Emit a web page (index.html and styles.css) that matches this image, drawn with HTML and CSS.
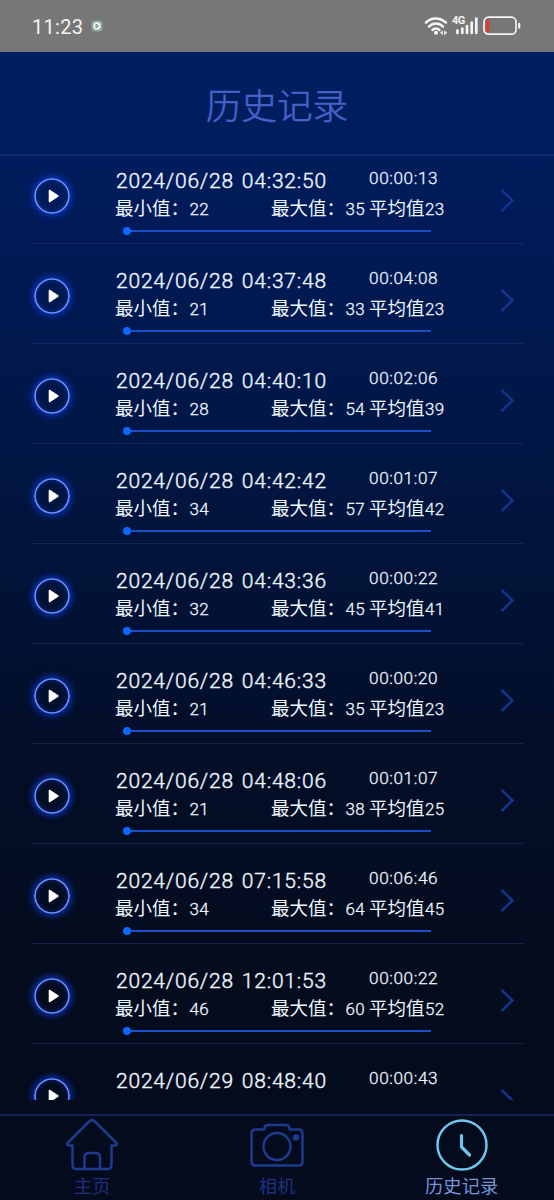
FILE: index.html
```html
<!DOCTYPE html>
<html lang="zh-CN">
<head>
<meta charset="utf-8">
<title>历史记录</title>
<link rel="stylesheet" href="styles.css">
</head>
<body>
<svg class="defs" width="0" height="0">
  <symbol id="play" viewBox="0 0 36 36"><circle cx="18" cy="18" r="17" fill="none" stroke="#6d90ff" stroke-width="1.7"/><path d="M15.500 12.500 23.800 18l-8.300 5.500z" fill="#fff" stroke="#fff" stroke-width="1.6" stroke-linejoin="round"/></symbol>
  <symbol id="chevron" viewBox="0 0 16 26"><path d="M2.500 3l11 10.500L2.500 24" fill="none" stroke="#14358f" stroke-width="2.500"/></symbol>
</svg>
<div class="screen">
  <div class="status">
    <span class="clock">11:23</span>
    <svg class="app-dot" viewBox="0 0 12 12"><rect x=".5" y=".5" width="11" height="11" rx="3.500" fill="#8fa79d"/><circle cx="6" cy="6" r="3.700" fill="#f4f8f6"/><path d="M5 4.300l2.500 1.700L5 7.700z" fill="none" stroke="#60736b" stroke-width=".9"/></svg>
    <svg class="wifi" viewBox="0 0 24 20" fill="none" stroke="#f4f4f4" stroke-width="2.500" stroke-linecap="round"><path d="M2 6.500C7.500 1 15.500 1 22 6.500M5 10.600c4-4 10-4 14 0M8.400 14c2-1.900 5-1.900 7 0"/><circle cx="12" cy="16.800" r="1.300" fill="#f4f4f4" stroke-width="1.500"/><path d="M18.800 14.200v5l-2.600-2.500zM20.200 14.200v5l2.800-2.500z" fill="#f4f4f4" stroke="none"/></svg>
    <span class="cell"><b>4G</b><svg viewBox="0 0 24 20" stroke="#f4f4f4" stroke-width="2.700" stroke-linecap="round"><path d="M3.400 14.500v2.500M8.300 12.500V17M13 10V17M17.700 6.500V17M22.300 2.500V17"/></svg></span>
    <svg class="battery" viewBox="0 0 38 20"><rect x="1" y="1.200" width="32" height="17" rx="4.500" fill="none" stroke="#f4f4f4" stroke-width="1.700"/><path d="M6.200 3.400v12.800H5Q2.800 16.200 2.800 13V6.600Q2.800 3.400 5 3.400z" fill="#e5382f"/><path d="M36.200 7.800v3.800" stroke="#f4f4f4" stroke-width="2.200" stroke-linecap="round"/></svg>
  </div>
  <header class="title">历史记录</header>
  <main class="list">
    <article class="row"><svg class="play"><use href="#play"/></svg><div class="info"><div class="top"><time>2024/06/28 04:32:50</time><span class="duration">00:00:13</span></div><div class="stats"><span class="min">最小值：<i>22</i></span><span class="max">最大值：<i>35</i></span><span>平均值<i>23</i></span></div><div class="track"></div></div><svg class="chevron"><use href="#chevron"/></svg></article>
    <article class="row"><svg class="play"><use href="#play"/></svg><div class="info"><div class="top"><time>2024/06/28 04:37:48</time><span class="duration">00:04:08</span></div><div class="stats"><span class="min">最小值：<i>21</i></span><span class="max">最大值：<i>33</i></span><span>平均值<i>23</i></span></div><div class="track"></div></div><svg class="chevron"><use href="#chevron"/></svg></article>
    <article class="row"><svg class="play"><use href="#play"/></svg><div class="info"><div class="top"><time>2024/06/28 04:40:10</time><span class="duration">00:02:06</span></div><div class="stats"><span class="min">最小值：<i>28</i></span><span class="max">最大值：<i>54</i></span><span>平均值<i>39</i></span></div><div class="track"></div></div><svg class="chevron"><use href="#chevron"/></svg></article>
    <article class="row"><svg class="play"><use href="#play"/></svg><div class="info"><div class="top"><time>2024/06/28 04:42:42</time><span class="duration">00:01:07</span></div><div class="stats"><span class="min">最小值：<i>34</i></span><span class="max">最大值：<i>57</i></span><span>平均值<i>42</i></span></div><div class="track"></div></div><svg class="chevron"><use href="#chevron"/></svg></article>
    <article class="row"><svg class="play"><use href="#play"/></svg><div class="info"><div class="top"><time>2024/06/28 04:43:36</time><span class="duration">00:00:22</span></div><div class="stats"><span class="min">最小值：<i>32</i></span><span class="max">最大值：<i>45</i></span><span>平均值<i>41</i></span></div><div class="track"></div></div><svg class="chevron"><use href="#chevron"/></svg></article>
    <article class="row"><svg class="play"><use href="#play"/></svg><div class="info"><div class="top"><time>2024/06/28 04:46:33</time><span class="duration">00:00:20</span></div><div class="stats"><span class="min">最小值：<i>21</i></span><span class="max">最大值：<i>35</i></span><span>平均值<i>23</i></span></div><div class="track"></div></div><svg class="chevron"><use href="#chevron"/></svg></article>
    <article class="row"><svg class="play"><use href="#play"/></svg><div class="info"><div class="top"><time>2024/06/28 04:48:06</time><span class="duration">00:01:07</span></div><div class="stats"><span class="min">最小值：<i>21</i></span><span class="max">最大值：<i>38</i></span><span>平均值<i>25</i></span></div><div class="track"></div></div><svg class="chevron"><use href="#chevron"/></svg></article>
    <article class="row"><svg class="play"><use href="#play"/></svg><div class="info"><div class="top"><time>2024/06/28 07:15:58</time><span class="duration">00:06:46</span></div><div class="stats"><span class="min">最小值：<i>34</i></span><span class="max">最大值：<i>64</i></span><span>平均值<i>45</i></span></div><div class="track"></div></div><svg class="chevron"><use href="#chevron"/></svg></article>
    <article class="row"><svg class="play"><use href="#play"/></svg><div class="info"><div class="top"><time>2024/06/28 12:01:53</time><span class="duration">00:00:22</span></div><div class="stats"><span class="min">最小值：<i>46</i></span><span class="max">最大值：<i>60</i></span><span>平均值<i>52</i></span></div><div class="track"></div></div><svg class="chevron"><use href="#chevron"/></svg></article>
    <article class="row"><svg class="play"><use href="#play"/></svg><div class="info"><div class="top"><time>2024/06/29 08:48:40</time><span class="duration">00:00:43</span></div></div><svg class="chevron"><use href="#chevron"/></svg></article>
  </main>
  <nav class="tabs">
    <a class="tab"><svg viewBox="0 0 54 54"><path d="M24.500 3.200q2.500-2.200 5 0L51 24.500q2 3-2 3h-2.500V47q0 4-4 4h-31q-4 0-4-4V27.500H5q-4 0-2-3zM19.500 51V39.500q0-4.500 4.500-4.500h6.500q4.500 0 4.500 4.500V51"/></svg><span>主页</span></a>
    <a class="tab"><svg viewBox="0 0 54 54"><path d="M14.500 11.500v-1q0-3.500 4-3.500h17q4 0 4 3.500v1h9q4 0 4 4v28q0 4-4 4h-43q-4 0-4-4v-28q0-4 4-4z"/><circle cx="27" cy="28.500" r="13.500"/><circle cx="46" cy="19.500" r="2" fill="currentColor"/></svg><span>相机</span></a>
    <a class="tab active"><svg viewBox="0 0 54 54"><circle cx="27" cy="27" r="24.500"/><path d="M26.500 17.500V29l8 8" stroke-width="3.200"/></svg><span>历史记录</span></a>
  </nav>
</div>
</body>
</html>
```

FILE: styles.css
```css
* { box-sizing: border-box; }
body { margin: 0; font-family: Roboto, "Noto Sans CJK SC", sans-serif; }
.defs { display: block; }
.screen {
  height: 1200px;
  overflow: hidden;
  display: flex;
  flex-direction: column;
  background: linear-gradient(#001f62 52px, #001b59 200px, #00184d 350px, #01143a 550px, #030e28 750px, #040c1e 950px, #040b1d 1200px);
}
.status {
  height: 52px;
  flex: none;
  background: #777;
  display: flex;
  align-items: center;
  padding: 0 33px 0 32px;
  color: #f4f4f4;
}
.clock { width: 51px; font-size: 20px; letter-spacing: 0.3px; padding-top: 2px; }
.app-dot { width: 12px; height: 12px; margin-left: 8px; }
.wifi { width: 24px; height: 20px; margin-left: auto; }
.cell { position: relative; width: 24px; height: 20px; margin-left: 6px; }
.cell svg { display: block; width: 24px; height: 20px; }
.cell b { position: absolute; left: -2px; top: -1px; font: 700 11px/12px Roboto, sans-serif; letter-spacing: -0.5px; }
.battery { width: 38px; height: 20px; margin-left: 5px; }
.title {
  height: 104px;
  flex: none;
  padding-top: 26px;
  border-bottom: 2px solid #0a2b70;
  text-align: center;
  font: 300 35.5px/52px "Noto Sans CJK SC", sans-serif;
  color: #4662c8;
  -webkit-text-stroke: 0.6px #4662c8;
}
.list { height: 944px; flex: none; overflow: hidden; padding-left: 31px; }
.row {
  display: flex;
  width: 493px;
  height: 100px;
  border-bottom: 1px solid rgba(42, 68, 132, 0.38);
}
.row:first-child { height: 88px; }
.row:first-child .play { margin-top: 22px; }
.row:first-child .info { padding-top: 11px; }
.row:first-child .chevron { margin-top: 31px; }
.play {
  width: 36px;
  height: 36px;
  margin: 34px 0 0 3px;
  flex: none;
  border-radius: 50%;
  box-shadow: 0 0 7px 1px #0b3ddd, inset 0 0 6px 0 #0a34b8;
}
.info { width: 332px; margin-left: 45px; padding-top: 23px; color: #eef6ff; }
.top { display: flex; height: 28px; }
.top time {
  width: 254px;
  padding-left: 1px;
  font-size: 21px;
  font-weight: 300;
  line-height: 28px;
  letter-spacing: 0.8px;
  word-spacing: 2px;
  white-space: nowrap;
  -webkit-text-stroke: 0.4px #eef6ff;
}
.duration { font-size: 17.2px; font-weight: 300; line-height: 22px; letter-spacing: 0.6px; -webkit-text-stroke: 0.3px #eef6ff; }
.stats { display: flex; height: 28px; font-size: 18.5px; line-height: 28px; white-space: nowrap; }
.stats i { font-style: normal; font-size: 17px; font-weight: 300; letter-spacing: 0.4px; margin-left: 0.5px; -webkit-text-stroke: 0.3px #eef6ff; }
.min { width: 156px; }
.max { width: 98px; }
.track {
  display: flex;
  align-items: center;
  width: 304px;
  height: 2px;
  margin: 7px 0 0 12px;
  background: #1a4fcb;
}
.track::before { content: ""; width: 8px; height: 8px; margin-left: -4px; border-radius: 50%; background: #0d68ff; }
.chevron { width: 16px; height: 26px; margin: 43px 0 0 52px; flex: none; }
.tabs {
  height: 86px;
  flex: none;
  margin-top: 14px;
  border-top: 2px solid #15215d;
  display: grid;
  grid-template-columns: repeat(3, 1fr);
}
.tab { display: flex; flex-direction: column; align-items: center; padding-top: 2px; color: #1d3b8f; }
.tab svg { width: 54px; height: 54px; fill: none; stroke: currentColor; stroke-width: 2.5; stroke-linecap: round; stroke-linejoin: round; }
.tab span { font: 400 18.3px/26px "Noto Sans CJK SC", sans-serif; color: #1d3180; }
.tab.active { color: #70c5ec; }
.tab.active span { color: #7893d8; }
```
